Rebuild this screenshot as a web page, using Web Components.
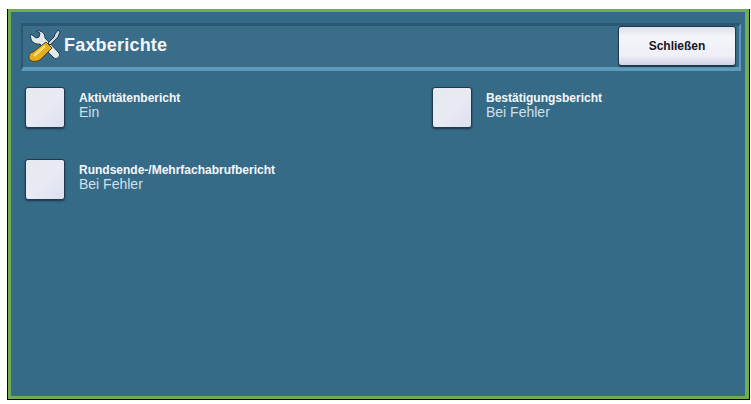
<!DOCTYPE html>
<html lang="de">
<head>
<meta charset="utf-8">
<title>Faxberichte</title>
<style>
 html, body { margin: 0; background: #fffffb; }
 body { font-family: "Liberation Sans", Arial, sans-serif; }
</style>
</head>
<body>
<fax-screen>
 <fax-header slot="header">
  <svg slot="icon" width="34" height="32" viewBox="0 0 34 32">
   <path d="M3 4 L8 8 L11 7 L12 3 L8 1 C13 0 17 3 17 8 L31 23 C33 26 29 30 26 28 L12 14 C6 15 1 10 3 4 Z" fill="#e2e7ea" stroke="#1c3d52" stroke-width="1"/>
   <path d="M32 2 L30 0 L27 4 L26 7 L20 13 L22 15 L28 9 L30 7 Z" fill="#cfd8dc" stroke="#1c3d52" stroke-width="1"/>
   <path d="M18 12 L24 18 L13 29 C10 32 4 32 2 30 C0 27 1 23 5 22 Z" fill="#e4ae1e" stroke="#4f4012" stroke-width="1"/>
   <path d="M17 16 L6 26" stroke="#f6dc70" stroke-width="2.4" fill="none"/>
  </svg>
  <span slot="title">Faxberichte</span>
  <fax-button slot="action">Schließen</fax-button>
 </fax-header>
 <fax-option label="Aktivitätenbericht" value="Ein"></fax-option>
 <fax-option label="Bestätigungsbericht" value="Bei Fehler"></fax-option>
 <fax-option label="Rundsende-/Mehrfachabrufbericht" value="Bei Fehler"></fax-option>
</fax-screen>

<script>
 class FaxScreen extends HTMLElement {
  constructor() {
   super()
   this.attachShadow({ mode: "open" }).innerHTML =
    /* html */
    `<style>
    :host {
     display: block;
     box-sizing: border-box;
     width: 743px;
     height: 391px;
     margin: 9px 0 0 7px;
     border: solid #000;
     border-width: 0 1px 1px 1px;
     color: #fff;
    }
    .frame {
     box-sizing: border-box;
     height: 100%;
     padding: 11px 4px 0 10px;
     border: solid #70ad50;
     border-width: 3px 4px 3px 3px;
     background: #366b88;
    }
    .options {
     display: grid;
     grid-template-columns: 407px 1fr;
     grid-auto-rows: 72px;
     padding: 16px 0 0 4px;
    }
    </style>
    <div class="frame">
     <slot name="header"></slot>
     <div class="options"><slot></slot></div>
    </div>`
  }
 }
 customElements.define("fax-screen", FaxScreen)

 class FaxHeader extends HTMLElement {
  constructor() {
   super()
   this.attachShadow({ mode: "open" }).innerHTML =
    /* html */
    `<style>
    :host {
     display: flex;
     align-items: center;
     box-sizing: border-box;
     height: 48px;
     padding: 0 3px 2px 5px;
     background: #3a6d8a;
     border-top: 3px solid #2a5873;
     border-left: 2px solid #2a5873;
     border-right: 2px solid #5d9abb;
     border-bottom: 4px solid #5d9abb;
    }
    ::slotted(svg) { flex: none; margin-right: 2px; }
    ::slotted([slot="title"]) {
     flex: 1;
     font-size: 18px;
     font-weight: bold;
     letter-spacing: .2px;
     color: #f2f6f8;
    }
    ::slotted([slot="action"]) { align-self: flex-start; }
    </style>
    <slot name="icon"></slot>
    <slot name="title"></slot>
    <slot name="action"></slot>`
  }
 }
 customElements.define("fax-header", FaxHeader)

 class FaxButton extends HTMLElement {
  constructor() {
   super()
   this.attachShadow({ mode: "open" }).innerHTML =
    /* html */
    `<style>
    :host {
     display: flex;
     align-items: center;
     justify-content: center;
     box-sizing: border-box;
     width: 118px;
     height: 40px;
     border: 1px solid #20394c;
     border-radius: 3px;
     background: linear-gradient(#dcdfe9, #f4f5fa 25%, #eeeff7 75%, #cfd2e2);
     box-shadow: 0 1px 1px #1d3648;
     color: #15151c;
     font-size: 12px;
     font-weight: bold;
    }
    </style>
    <slot></slot>`
  }
 }
 customElements.define("fax-button", FaxButton)

 class FaxOption extends HTMLElement {
  constructor() {
   super()
   this.attachShadow({ mode: "open" }).innerHTML =
    /* html */
    `<style>
    :host {
     display: flex;
     align-items: flex-start;
     gap: 14px;
    }
    .box {
     box-sizing: border-box;
     flex: none;
     width: 40px;
     height: 41px;
     border: 1px solid #20394c;
     border-radius: 3px;
     background: linear-gradient(135deg, #e6e8f0, #e9ebf4 50%, #dcdfef);
     box-shadow: 0 1px 2px #1d3648;
    }
    .text { padding-top: 4px; }
    .label {
     font-size: 12px;
     line-height: 14px;
     font-weight: bold;
     color: #f4f7f9;
    }
    .value {
     font-size: 14px;
     line-height: 15px;
     color: #cfe0ea;
    }
    </style>
    <div class="box"></div>
    <div class="text">
     <div class="label"></div>
     <div class="value"></div>
    </div>`
   this.shadowRoot.querySelector(".label").textContent =
    this.getAttribute("label")
   this.shadowRoot.querySelector(".value").textContent =
    this.getAttribute("value")
  }
 }
 customElements.define("fax-option", FaxOption)
</script>
</body>
</html>
